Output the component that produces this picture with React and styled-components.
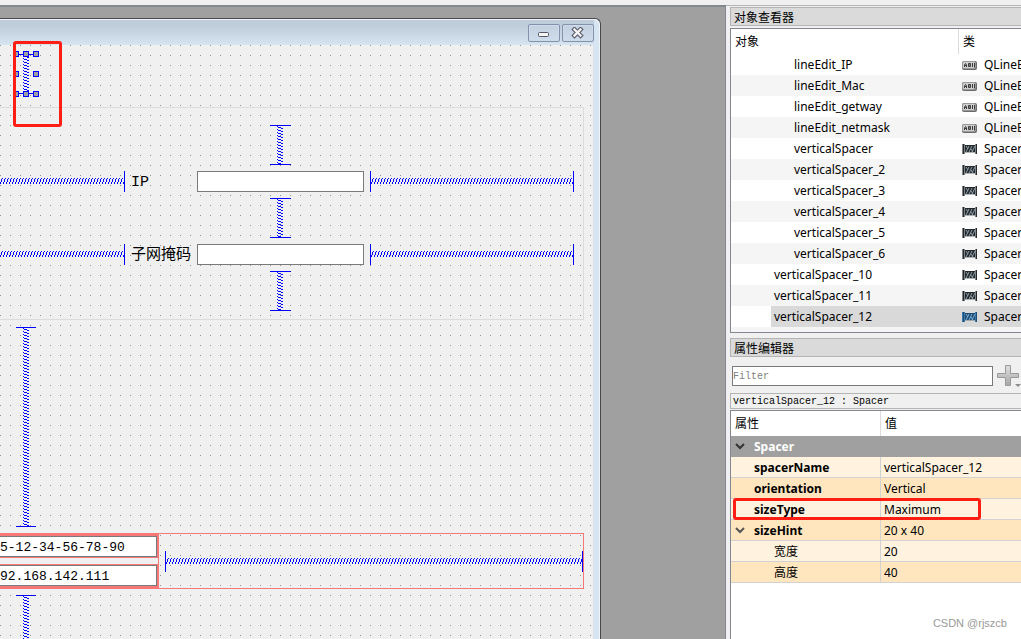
import React from 'react';
import styled, { createGlobalStyle, css } from 'styled-components';

const colors = {
  Face: '#f0f0f0',
  Workspace: '#a0a0a0',
  Frame: '#828790',
  Edge: '#b4b4b4',
  Blue: '#0000ff',
  LayoutRed: '#f87878',
  Mark: '#ff1e14',
};

const fonts = {
  ui: '"Noto Sans", "Noto Sans CJK SC", sans-serif',
  song: '"Liberation Mono", "Noto Sans CJK SC", monospace',
};

const objects = [
  { name: 'lineEdit_IP', type: 'QLineEdit', depth: 3 },
  { name: 'lineEdit_Mac', type: 'QLineEdit', depth: 3 },
  { name: 'lineEdit_getway', type: 'QLineEdit', depth: 3 },
  { name: 'lineEdit_netmask', type: 'QLineEdit', depth: 3 },
  { name: 'verticalSpacer', type: 'Spacer', depth: 3 },
  { name: 'verticalSpacer_2', type: 'Spacer', depth: 3 },
  { name: 'verticalSpacer_3', type: 'Spacer', depth: 3 },
  { name: 'verticalSpacer_4', type: 'Spacer', depth: 3 },
  { name: 'verticalSpacer_5', type: 'Spacer', depth: 3 },
  { name: 'verticalSpacer_6', type: 'Spacer', depth: 3 },
  { name: 'verticalSpacer_10', type: 'Spacer', depth: 2 },
  { name: 'verticalSpacer_11', type: 'Spacer', depth: 2 },
  { name: 'verticalSpacer_12', type: 'Spacer', depth: 2, selected: true },
];

const properties = [
  { name: 'spacerName', value: 'verticalSpacer_12' },
  { name: 'orientation', value: 'Vertical' },
  { name: 'sizeType', value: 'Maximum', marked: true },
  { name: 'sizeHint', value: '20 x 40', open: true },
  { name: '宽度', value: '20', child: true },
  { name: '高度', value: '40', child: true },
];

const LineEditIcon = () => (
  <svg width="16" height="16" viewBox="0 0 16 16" aria-hidden="true">
    <rect x="0" y="4" width="15" height="9" rx="2" fill="#6c6c6c" />
    <rect x="0.5" y="4.5" width="13" height="7" rx="1.5" fill="#cfcfcf" stroke="#9a9a9a" />
    <path
      d="M2.5 10V8l1-1.5 1 1.5v2M2.5 8.5h2M6.5 6.5v3h2v-3zM6.5 8h2M10.5 6v4M12.5 6v4.5"
      fill="none"
      stroke="#3c3c3c"
    />
  </svg>
);

const SpacerIcon = ({ active }) => {
  const dark = active ? '#1f4c73' : '#23292d';
  return (
    <svg width="16" height="16" viewBox="0 0 16 16" aria-hidden="true">
      <path d="M0 3h3v10H0zM13 3h2v10h-2z" fill={active ? '#3c78a8' : '#7d8386'} />
      <path d="M1.5 3v10M14.5 3v10" stroke={dark} />
      <rect x="3" y="4" width="10" height="7" fill={dark} />
      <path d="M4 11l3-6M7 11l3-6M10 11l3-6M4 5l2 3M9 8l2 3" stroke={active ? '#7fb0d8' : '#8fa0aa'} fill="none" />
      <path d="M3 11h10v1H3z" fill="#8d9498" opacity="0.7" />
    </svg>
  );
};

const Chevron = ({ color }) => (
  <svg width="10" height="8" viewBox="0 0 10 8" aria-hidden="true">
    <path d="M1 1l4 4 4-4" fill="none" stroke={color} strokeWidth="2" />
  </svg>
);

const PlusIcon = () => (
  <svg width="24" height="24" viewBox="0 0 24 24" aria-hidden="true">
    <defs>
      <linearGradient id="plusFill" x1="0" y1="0" x2="0" y2="1">
        <stop offset="0" stopColor="#e0e0e0" />
        <stop offset="1" stopColor="#a6a6a6" />
      </linearGradient>
    </defs>
    <path
      d="M8.5 1.5h5v8h8v4h-8v8h-5v-8h-8v-4h8z"
      fill="url(#plusFill)"
      stroke="#999"
    />
    <path d="M18 20h6l-3 3z" fill="#8c8c8c" />
  </svg>
);

const MinimizeIcon = () => (
  <svg width="14" height="12" viewBox="0 0 14 12" aria-hidden="true">
    <rect x="1.5" y="5.5" width="10" height="4" rx="1" fill="#f4f4f4" stroke="#535666" />
  </svg>
);

const CloseIcon = () => (
  <svg width="14" height="12" viewBox="0 0 14 12" aria-hidden="true">
    <path d="M3.5 2.5l6 6M9.5 2.5l-6 6" stroke="#535666" strokeWidth="4.5" strokeLinecap="square" />
    <path d="M3.5 2.5l6 6M9.5 2.5l-6 6" stroke="#f4f4f4" strokeWidth="2.4" strokeLinecap="square" />
  </svg>
);

// spring drawn between two end bars
const HSpring = ({ open }) => (
  <HSpringBox $open={open}>
    <svg width="100%" height="6" aria-hidden="true">
      <defs>
        <pattern id="hSpring" width="3" height="6" patternUnits="userSpaceOnUse">
          <path
            d="M2 0h1v1H2zM1 1h1v3H1zM0 4h1v2H0z"
            fill={colors.Blue}
            shapeRendering="crispEdges"
          />
        </pattern>
      </defs>
      <rect width="100%" height="6" fill="url(#hSpring)" />
    </svg>
  </HSpringBox>
);

const VSpring = ({ size, selected }) => (
  <VSpringBox $size={size}>
    <svg width="6" height="100%" aria-hidden="true">
      <defs>
        <pattern id="vSpring" width="6" height="3" patternUnits="userSpaceOnUse">
          <path
            d="M0 0h1v1H0zM1 1h3v1H1zM4 2h2v1H4z"
            fill={colors.Blue}
            shapeRendering="crispEdges"
          />
        </pattern>
      </defs>
      <rect width="6" height="100%" fill="url(#vSpring)" />
    </svg>
    {selected && (
      <Handles>
        {[0, 1, 2, 3, 4, 5, 6, 7, 8].map((n) => <Handle key={n} $hidden={n === 4} />)}
      </Handles>
    )}
  </VSpringBox>
);

const FormWindow = () => (
  <Window>
    <TitleBar>
      <TitleButton aria-label="Minimize"><MinimizeIcon /></TitleButton>
      <TitleButton aria-label="Close"><CloseIcon /></TitleButton>
    </TitleBar>
    <Form>
      <SpacerCell>
        <VSpring size={40} selected />
        <SelectionMark />
      </SpacerCell>
      <GroupBox>
        <VSpring size={40} />
        <GridRow>
          <HSpring open />
          <FieldLabel htmlFor="ip">IP</FieldLabel>
          <LineEdit id="ip" />
          <HSpring />
        </GridRow>
        <VSpring size={40} />
        <GridRow>
          <HSpring open />
          <FieldLabel htmlFor="netmask">子网掩码</FieldLabel>
          <LineEdit id="netmask" />
          <HSpring />
        </GridRow>
        <VSpring size={40} />
      </GroupBox>
      <SpacerCell>
        <VSpring size={200} />
      </SpacerCell>
      <LayoutFrame>
        <EditColumn>
          <EditCell><LineEdit $open aria-label="Mac" defaultValue="5-12-34-56-78-90" /></EditCell>
          <EditCell><LineEdit $open aria-label="Address" defaultValue="92.168.142.111" /></EditCell>
        </EditColumn>
        <HSpring />
      </LayoutFrame>
      <SpacerCell>
        <VSpring size={200} />
      </SpacerCell>
    </Form>
  </Window>
);

const ObjectInspector = () => (
  <>
    <DockTitle>对象查看器</DockTitle>
    <Tree>
      <colgroup>
        <col width="228" />
        <col />
      </colgroup>
      <thead>
        <tr>
          <HeadCell>对象</HeadCell>
          <HeadCell>类</HeadCell>
        </tr>
      </thead>
      <tbody>
        {objects.map((item) => (
          <TreeRow key={item.name}>
            <NameCell $depth={item.depth} $selected={item.selected}>
              <span>{item.name}</span>
            </NameCell>
            <ClassCell $selected={item.selected}>
              <ClassInfo>
                {item.type === 'Spacer' ? <SpacerIcon active={item.selected} /> : <LineEditIcon />}
                {item.type}
              </ClassInfo>
            </ClassCell>
          </TreeRow>
        ))}
      </tbody>
    </Tree>
  </>
);

const PropertyEditor = () => (
  <>
    <DockTitle>属性编辑器</DockTitle>
    <FilterBar>
      <FilterInput aria-label="Filter" placeholder="Filter" />
      <AddButton aria-label="Add property"><PlusIcon /></AddButton>
    </FilterBar>
    <ObjectLabel>verticalSpacer_12 : Spacer</ObjectLabel>
    <PropertyPane>
      <PropertyTable>
        <colgroup>
          <col width="150" />
          <col />
        </colgroup>
        <thead>
          <tr>
            <HeadCell>属性</HeadCell>
            <HeadCell>值</HeadCell>
          </tr>
        </thead>
        <tbody>
          <GroupRow>
            <td colSpan="2">
              <PropertyName>
                <Toggle><Chevron color="#333" /></Toggle>
                Spacer
              </PropertyName>
            </td>
          </GroupRow>
          {properties.map((item) => (
            <PropertyRow key={item.name}>
              <td>
                <PropertyName $child={item.child}>
                  <Toggle>{item.open && <Chevron color="#555" />}</Toggle>
                  {item.name}
                </PropertyName>
                {item.marked && <RowMark />}
              </td>
              <td>{item.value}</td>
            </PropertyRow>
          ))}
        </tbody>
      </PropertyTable>
    </PropertyPane>
    <Watermark>CSDN @rjszcb</Watermark>
  </>
);

const App = () => (
  <Page>
    <GlobalStyle />
    <Workspace>
      <FormWindow />
    </Workspace>
    <Docks>
      <ObjectInspector />
      <PropertyEditor />
    </Docks>
  </Page>
);

const GlobalStyle = createGlobalStyle`
  * {
    box-sizing: border-box;
  }

  body {
    margin: 0;
    overflow: hidden;
    background: ${colors.Face};
    color: #000;
    font: 12px/20px ${fonts.ui};
  }

  svg {
    display: block;
    flex-shrink: 0;
  }

  button, input {
    font: inherit;
    color: inherit;
    margin: 0;
    padding: 0;
  }
`;

const Page = styled.div`
  display: flex;
  height: 100vh;
  padding-top: 5px;
`;

const Workspace = styled.main`
  flex: 1;
  min-width: 0;
  overflow: hidden;
  padding: 11px 124px 0 0;
  background: ${colors.Workspace};
  border: 1px solid ${colors.Frame};
  border-width: 2px 1px 0 0;
`;

const Window = styled.section`
  border: 1px solid #484848;
  border-width: 1px 1px 0 0;
  border-radius: 0 6px 0 0;
  background: #d7e4f2;
  box-shadow: inset -1px 1px 0 #eef4fa;
  padding-right: 7px;
`;

const TitleBar = styled.header`
  display: flex;
  justify-content: flex-end;
  gap: 2px;
  height: 26px;
  margin: 0 -1px 0 0;
  padding-top: 5px;
  background: linear-gradient(#eef4fa 1px, #bfcddb 1px, #bfcddb 7px, #d7e4f2);
`;

const TitleButton = styled.button`
  display: flex;
  align-items: center;
  justify-content: center;
  width: 32px;
  height: 18px;
  border: 1px solid #8391ad;
  border-radius: 2px;
  background: linear-gradient(#c2d0e0, #cfdceb);
  box-shadow: inset 0 0 0 1px #cedbe9;
`;

const Form = styled.div`
  height: 700px;
  padding: 9px 9px 0 0;
  background-color: #929292;
  background-image:
    linear-gradient(to right, transparent 1px, ${colors.Face} 1px),
    linear-gradient(transparent 1px, ${colors.Face} 1px);
  background-size: 10px 10px;
`;

const SpacerCell = styled.div`
  position: relative;
  padding-left: 16px;
`;

const VSpringBox = styled.div`
  position: relative;
  width: 20px;
  height: ${({ $size }) => $size}px;
  padding-left: 7px;
  border: 1px solid ${colors.Blue};
  border-width: 1px 0;
`;

const HSpringBox = styled.div`
  min-width: 0;
  flex: 1;
  height: 21px;
  padding-top: 7px;
  border: 1px solid ${colors.Blue};
  border-width: ${({ $open }) => ($open ? '0 1px 0 0' : '0 1px')};
`;

const Handles = styled.div`
  position: absolute;
  inset: -4px -3px;
  display: grid;
  grid-template-columns: repeat(3, 6px);
  justify-content: space-between;
  align-content: space-between;
`;

const Handle = styled.i`
  height: 6px;
  border: 1px solid ${colors.Blue};
  background: ${colors.Workspace};
  visibility: ${({ $hidden }) => ($hidden ? 'hidden' : 'visible')};
`;

const SelectionMark = styled.div`
  position: absolute;
  top: -13px;
  left: 13px;
  width: 49px;
  height: 86px;
  border: 3px solid ${colors.Mark};
  border-radius: 3px;
`;

const GroupBox = styled.div`
  margin: 13px 0 7px;
  padding: 17px 9px 8px 0;
  border: 1px solid #dcdcdc;
  border-left: 0;

  & > ${VSpringBox} {
    width: 21px;
    margin-left: 270px;
  }
`;

const GridRow = styled.div`
  display: grid;
  grid-template-columns: 125px 60px 167px 1fr;
  column-gap: 6px;
  align-items: center;
  margin: 6px 0;
`;

const FieldLabel = styled.label`
  height: 21px;
  padding-top: 2px;
  font: 15px/20px ${fonts.song};
`;

const LineEdit = styled.input`
  display: block;
  width: 100%;
  height: 21px;
  padding-top: 1px;
  border: 1px solid #7a7a7a;
  border-left-width: ${({ $open }) => ($open ? 0 : 1)}px;
  background: #fff;
  font: 13px/18px ${fonts.song};
`;

const LayoutFrame = styled.div`
  display: flex;
  align-items: center;
  gap: 6px;
  margin: 6px 0;
  border: 1px solid ${colors.LayoutRed};
  border-left: 0;
`;

const EditColumn = styled.div`
  display: flex;
  flex-direction: column;
  gap: 6px;
  width: 159px;
  border-right: 1px solid ${colors.LayoutRed};
`;

const EditCell = styled.div`
  padding: 2px 1px 1px 0;
  background: ${colors.LayoutRed};

  &:last-child {
    padding: 1px 1px 2px 0;
  }
`;

const Docks = styled.aside`
  display: flex;
  flex-direction: column;
  width: 295px;
  padding-left: 4px;
  border-top: 1px solid ${colors.Edge};
`;

const DockTitle = styled.h2`
  margin: 1px 0 2px;
  padding-left: 3px;
  height: 19px;
  border: 1px solid ${colors.Edge};
  border-right: 0;
  background: #dadada;
  font: 12px/20px ${fonts.ui};
`;

const tableBase = css`
  width: 100%;
  table-layout: fixed;
  border-spacing: 0;
  background: #fff;

  td, th {
    padding: 0;
    white-space: nowrap;
    overflow: hidden;
  }
`;

const Tree = styled.table`
  ${tableBase}
  border: 1px solid ${colors.Frame};
  border-right: 0;
  background: #f5f5f5;
  padding-bottom: 5px;
  margin-bottom: 4px;
`;

const HeadCell = styled.th`
  height: 25px;
  background: #fff;
  text-align: left;
  font-weight: 400;

  && {
    padding-left: 4px;
  }

  &:first-child {
    border-right: 1px solid #dcdcdc;
  }
`;

const TreeRow = styled.tr`
  height: 21px;
  background: #fff;

  &:nth-child(even) {
    background: #f5f5f5;
  }
`;

const NameCell = styled.td`
  && {
    padding-left: ${({ $depth }) => $depth * 20}px;
  }

  span {
    display: block;
    height: 21px;
    padding-left: 3px;
    line-height: 22px;
    background: ${({ $selected }) => ($selected ? '#d9d9d9' : 'none')};
  }
`;

const ClassCell = styled.td`
  background: ${({ $selected }) => ($selected ? '#d9d9d9' : 'none')};
`;

const ClassInfo = styled.div`
  display: flex;
  align-items: center;
  gap: 6px;
  height: 21px;
  padding-left: 3px;
`;

const FilterBar = styled.div`
  display: flex;
  align-items: center;
  gap: 4px;
  height: 26px;
  margin: 4px 0 3px;
  padding-left: 2px;
`;

const FilterInput = styled.input`
  flex: 1;
  min-width: 0;
  height: 20px;
  border: 1px solid #7a7a7a;
  background: #fff;
  font: 10px/18px ${fonts.song};

  &::placeholder {
    color: #808080;
  }
`;

const AddButton = styled.button`
  border: 0;
  background: none;
`;

const ObjectLabel = styled.div`
  height: 16px;
  margin: 1px 0;
  padding-left: 2px;
  border: 1px solid ${colors.Edge};
  border-right: 0;
  font: 10px/16px ${fonts.song};
`;

const PropertyPane = styled.div`
  flex: 1;
  border: 1px solid ${colors.Frame};
  border-width: 1px 0 0 1px;
  background: #fff;
`;

const PropertyTable = styled.table`
  ${tableBase}
`;

const GroupRow = styled.tr`
  height: 21px;
  background: ${colors.Workspace};
  color: #fff;
`;

const PropertyRow = styled.tr`
  height: 21px;
  background: #fff2de;

  &:nth-child(odd) {
    background: #ffe6bf;
  }

  td {
    position: relative;
    overflow: visible;
    padding-top: 2px;
    line-height: 18px;
    border-bottom: 1px solid #d2d2d2;
  }

  td:first-child {
    border-right: 1px solid #d2d2d2;
  }

  td:last-child {
    padding-left: 3px;
  }
`;

const PropertyName = styled.div`
  display: flex;
  align-items: center;
  height: 18px;
  padding-left: ${({ $child }) => ($child ? 20 : 0)}px;
  font-weight: ${({ $child }) => ($child ? 400 : 700)};
`;

const Toggle = styled.span`
  width: 23px;
  padding-left: 4px;
`;

const RowMark = styled.div`
  position: absolute;
  z-index: 1;
  top: -1px;
  left: 2px;
  width: 248px;
  height: 22px;
  border: 3px solid ${colors.Mark};
  border-radius: 3px;
`;

const Watermark = styled.div`
  position: absolute;
  right: 14px;
  bottom: 6px;
  color: #999;
  font: 11px/20px "Liberation Sans", sans-serif;
`;

export default App;
